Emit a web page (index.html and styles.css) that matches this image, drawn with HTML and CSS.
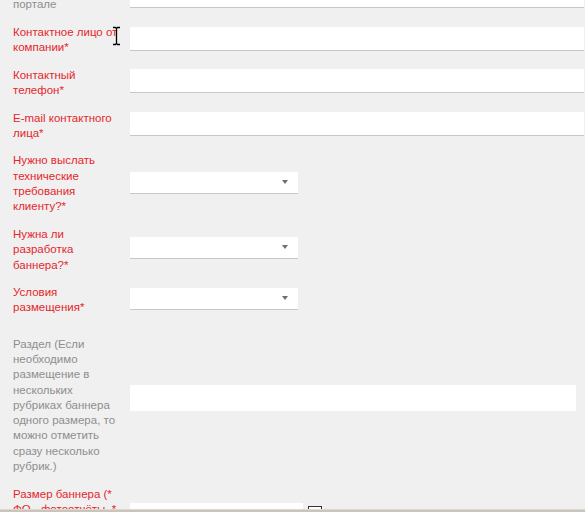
FILE: index.html
```html
<html>
    <head>
        <link rel="stylesheet" href="styles.css">
    </head>
    <body>
        <div class="form">
            <div class="row">
                <label class="label label--optional">Страница на<br>портале</label>
                <div class="field"></div>
            </div>
            <div class="row">
                <label class="label">Контактное лицо от<br>компании*</label>
                <div class="field"></div>
            </div>
            <div class="row">
                <label class="label">Контактный<br>телефон*</label>
                <div class="field"></div>
            </div>
            <div class="row">
                <label class="label">E-mail контактного<br>лица*</label>
                <div class="field"></div>
            </div>
            <div class="row">
                <label class="label">Нужно выслать<br>технические<br>требования<br>клиенту?*</label>
                <div class="select"><span class="select__arrow"></span></div>
            </div>
            <div class="row">
                <label class="label">Нужна ли<br>разработка<br>баннера?*</label>
                <div class="select"><span class="select__arrow"></span></div>
            </div>
            <div class="row">
                <label class="label">Условия<br>размещения*</label>
                <div class="select"><span class="select__arrow"></span></div>
            </div>
            <div class="row row--section">
                <label class="label label--optional">Раздел (Если<br>необходимо<br>размещение в<br>нескольких<br>рубриках баннера<br>одного размера, то<br>можно отметить<br>сразу несколько<br>рубрик.)</label>
                <div class="field field--list"></div>
            </div>
            <div class="row row--size">
                <label class="label">Размер баннера (*<br>ФО - фотоотчёты, *<br>ГК - главная<br>колонка)*</label>
                <div class="size">
                    <div class="size__input"></div>
                    <span class="size__check"></span>
                </div>
            </div>
        </div>

        <svg class="cursor" width="9" height="20" viewBox="0 0 9 20">
            <path d="M1 1.5h2.5l1 1 1-1H8M4.5 2.5v15M1 18.5h2.5l1-1 1 1H8" fill="none" stroke="#000" stroke-width="1.3"/>
        </svg>
        <div class="window-edge"></div>
    </body>
</html>
```

FILE: styles.css
```css
* {
    box-sizing: border-box;
}

html {
    overflow: hidden;
}

body {
    margin: 0;
    background-color: #f0f0f0;
    font-family: "Liberation Sans", Arial, sans-serif;
    font-size: 11.5px;
    line-height: 15.3px;
}

.form {
    margin-top: -18.1px;
    padding-left: 13px;
    padding-right: 1px;
}

.row {
    display: grid;
    grid-template-columns: 106px 1fr;
    column-gap: 11px;
    align-items: center;
    margin-bottom: 12.3px;
}

.label {
    white-space: nowrap;
    color: #e5262b;
}

.label--optional {
    color: #8e8e8e;
}

.field {
    height: 24px;
    margin-bottom: 3px;
    background-color: #fff;
    border-bottom: 1px solid #c8c8c8;
}

.select {
    position: relative;
    width: 168px;
    height: 22px;
    margin-bottom: 3px;
    background-color: #fff;
    border-bottom: 1px solid #c8c8c8;
}

.select__arrow {
    position: absolute;
    right: 10px;
    top: 8px;
    border-left: 3.5px solid transparent;
    border-right: 3.5px solid transparent;
    border-top: 4px solid #707070;
}

.row--section {
    padding-top: 8.6px;
    padding-right: 8px;
}

.field--list {
    height: 26px;
    border-bottom: none;
    margin-bottom: 15px;
}

.row--size {
    align-items: start;
}

.size {
    display: flex;
    align-items: flex-start;
    gap: 5px;
    margin-top: 16.3px;
}

.size__input {
    width: 173px;
    height: 22px;
    background-color: #fff;
}

.size__check {
    width: 14px;
    height: 14px;
    margin-top: 3px;
    border: 1px solid #333;
    background-color: #fff;
}

.cursor {
    position: absolute;
    left: 112px;
    top: 26px;
}

.window-edge {
    position: fixed;
    left: 0;
    right: 0;
    bottom: 0;
    height: 3px;
    background-color: #c9c5bb;
    border-top: 1px solid #dcd9d2;
}
```
